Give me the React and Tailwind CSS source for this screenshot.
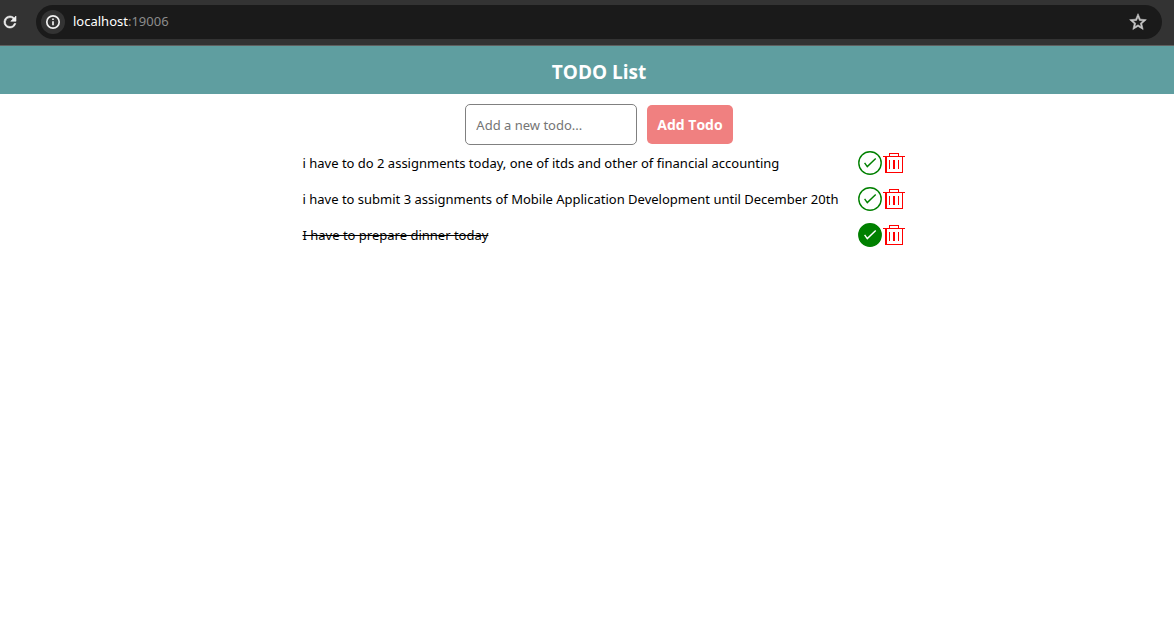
import { useState } from "react";

const initialTodos = [
  { id: 1, text: "i have to do 2 assignments today, one of itds and other of financial accounting", done: false },
  { id: 2, text: "i have to submit 3 assignments of Mobile Application Development until December 20th", done: false },
  { id: 3, text: "I have to prepare dinner today", done: true },
];

function ReloadIcon() {
  return (
    <svg viewBox="0 0 24 24" className="size-[18px]" fill="currentColor" stroke="currentColor" strokeWidth="0.8">
      <path d="M17.65 6.35A7.95 7.95 0 0 0 12 4a8 8 0 1 0 7.73 10h-2.08A6 6 0 1 1 12 6c1.66 0 3.14.69 4.22 1.78L13 11h7V4z" />
    </svg>
  );
}

function InfoIcon() {
  return (
    <svg viewBox="0 0 16 16" className="size-4" fill="none" stroke="currentColor" strokeWidth="1.7">
      <circle cx="8" cy="8" r="6.2" />
      <path d="M8 7.2v4M8 4.5v1.6" />
    </svg>
  );
}

function StarIcon() {
  return (
    <svg viewBox="0 0 24 24" className="size-5" fill="currentColor" stroke="currentColor" strokeWidth="0.7">
      <path d="m22 9.24-7.19-.62L12 2 9.19 8.63 2 9.24l5.46 4.73L5.82 21 12 17.27 18.18 21l-1.63-7.03zM12 15.4l-3.76 2.27 1-4.28-3.32-2.88 4.38-.38L12 6.1l1.71 4.04 4.38.38-3.32 2.88 1 4.28z" />
    </svg>
  );
}

function CheckIcon({ done }) {
  return (
    <svg viewBox="0 0 24 24" className="size-6" fill="none" strokeWidth="1.4">
      <circle cx="12" cy="12" r="11.2" stroke="#008000" fill={done ? "#008000" : "none"} />
      <path d="M6.6 11.8 9.3 15.6 17.7 7.5" stroke={done ? "#ffffff" : "#008000"} />
    </svg>
  );
}

function TrashIcon() {
  return (
    <svg viewBox="0 0 24 24" className="size-6" fill="#ff0000" shapeRendering="crispEdges">
      <path d="M7 2h10v3h6v1h-2v16H3V6H1V5h6zm1 1v2h8V3zM5 6v15h15V6z" fillRule="evenodd" />
      <path d="M7 9h1v9H7zM11 9h2v9h-2zM16 9h1v9h-1z" />
    </svg>
  );
}

function BrowserBar() {
  return (
    <div className="flex h-[46px] items-center border-b border-[#5f5f5f] bg-[#333333] pr-3 pb-px pl-px">
      <button type="button" aria-label="Reload" className="text-[#f1f1f1]">
        <ReloadIcon />
      </button>
      <div className="ml-[17px] flex h-[34px] flex-1 items-center rounded-full bg-[#1a1a1a] pr-[14px] pl-[5px]">
        <button type="button" aria-label="Site information" className="flex size-6 items-center justify-center rounded-full bg-[#333333] text-[#f1f1f1]">
          <InfoIcon />
        </button>
        <p className="ml-2 flex-1 text-[13px] text-white">
          localhost<span className="text-[#8c8c8c]">:19006</span>
        </p>
        <button type="button" aria-label="Bookmark this page" className="text-[#c7c7c7]">
          <StarIcon />
        </button>
      </div>
    </div>
  );
}

export default function App() {
  const [todos, setTodos] = useState(initialTodos);
  const [draft, setDraft] = useState("");

  const addTodo = (event) => {
    event.preventDefault();
    if (!draft.trim()) return;
    setTodos([...todos, { id: Date.now(), text: draft, done: false }]);
    setDraft("");
  };
  const toggle = (id) => setTodos(todos.map((t) => (t.id === id ? { ...t, done: !t.done } : t)));
  const remove = (id) => setTodos(todos.filter((t) => t.id !== id));

  return (
    <div className="min-h-screen bg-white font-['Noto_Sans','Open_Sans',sans-serif] text-black">
      <BrowserBar />
      <header className="bg-[#5f9ea0] pt-3 pb-2 pl-6 text-center">
        <h1 className="font-['Open_Sans','Noto_Sans',sans-serif] text-[19px] leading-7 font-bold text-white">TODO List</h1>
      </header>
      <main className="flex flex-col items-center pt-2.5 pl-6">
        <form onSubmit={addTodo} className="flex items-center gap-2.5">
          <input
            type="text"
            aria-label="New todo"
            placeholder="Add a new todo..."
            value={draft}
            onChange={(event) => setDraft(event.target.value)}
            className="h-[41px] w-[172px] rounded-[5px] border border-[#808080] px-2.5 text-[13px] placeholder:text-[#757575]"
          />
          <button type="submit" className="h-[39px] rounded-[5px] bg-[#f08080] px-2.5 font-['Open_Sans','Noto_Sans',sans-serif] text-sm font-bold text-white">
            Add Todo
          </button>
        </form>
        <ul className="mt-1.5 flex w-full max-w-[613px] flex-col gap-3">
          {todos.map((todo) => (
            <li key={todo.id} className="flex items-center justify-between pl-2.5">
              <span className={todo.done ? "text-[13px] leading-6 line-through" : "text-[13px] leading-6"}>{todo.text}</span>
              <div className="flex">
                <button type="button" aria-label={"Complete: " + todo.text} onClick={() => toggle(todo.id)}>
                  <CheckIcon done={todo.done} />
                </button>
                <button type="button" aria-label={"Delete: " + todo.text} onClick={() => remove(todo.id)}>
                  <TrashIcon />
                </button>
              </div>
            </li>
          ))}
        </ul>
      </main>
    </div>
  );
}
